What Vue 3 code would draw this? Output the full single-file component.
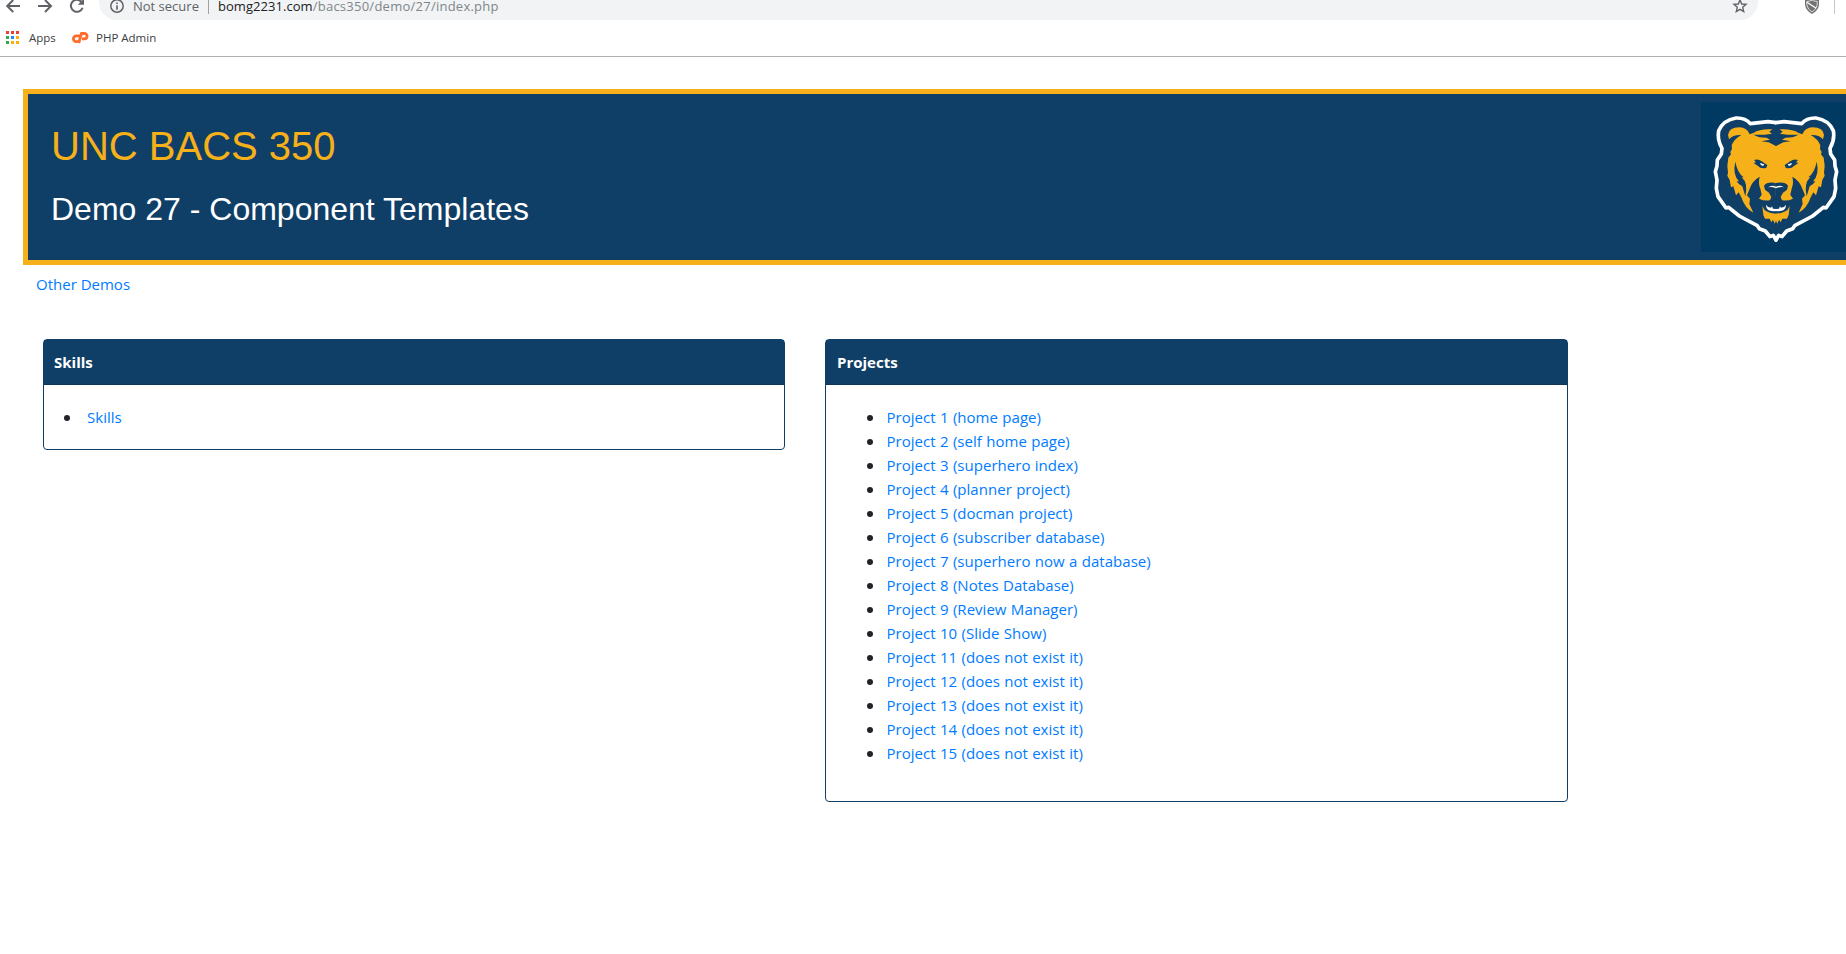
<script setup>
const tiles = [
  ['#ea4335', '#ea4335', '#ea4335'],
  ['#34a853', '#1a8cff', '#fbb205'],
  ['#34a853', '#fbb205', '#fbb205'],
].flat().map((color, i) => ({ color, x: (i % 3) * 5, y: Math.floor(i / 3) * 5 }))

const titles = [
  'home page', 'self home page', 'superhero index', 'planner project', 'docman project',
  'subscriber database', 'superhero now a database', 'Notes Database', 'Review Manager', 'Slide Show',
  'does not exist it', 'does not exist it', 'does not exist it', 'does not exist it', 'does not exist it',
]
const projects = titles.map((t, i) => `Project ${i + 1} (${t})`)

// The bear's head is symmetric: one half is drawn, then mirrored about x = 240.
const halves = ['', 'translate(480 0) scale(-1 1)']
const headPath = 'M240 128L216 125 163 131Q148 113 120 114 82 120 68 152 63 180 78 205L76 222 64 240 63 258 58 275 63 300 61 325 66 350 90 384 98 382 130 408 184 437 190 446 208 453 222 470 232 466 240 480'
</script>

<template>
  <div class="window">
    <header class="chrome">
      <div class="toolbar">
        <svg class="nav" width="90" height="20" viewBox="0 0 90 20">
          <g fill="none" stroke="#5f6368" stroke-width="2">
            <path d="M20 6H8M13.200 0L7.200 6l6 6" />
            <path d="M38 6h12M45 0l6 6-6 6" />
            <path d="M82.600 7.700A6 6 0 1 1 81.300 1.700" />
          </g>
          <path fill="#5f6368" d="M84 -1.500v6.200h-6.200z" />
        </svg>
        <div class="omnibox">
          <svg class="info" width="16" height="16" viewBox="0 0 16 16">
            <circle cx="8" cy="8" r="6.200" fill="none" stroke="#5f6368" stroke-width="1.500" />
            <path fill="#5f6368" d="M7.200 4.500h1.600V6H7.200zM7.200 7.200h1.600v4.500H7.200z" />
          </svg>
          <span class="secure">Not secure</span>
          <span class="bar"></span>
          <span class="url"><b>bomg2231.com</b>/bacs350/demo/27/index.php</span>
          <svg class="star" width="16" height="16" viewBox="0 0 16 16">
            <path d="M8 2l1.700 4 4.300.4-3.300 2.900 1 4.300L8 11.300l-3.700 2.300 1-4.300L2 6.400 6.300 6z" fill="none" stroke="#5f6368" stroke-width="1.400" />
          </svg>
        </div>
        <svg class="shield" width="16" height="18" viewBox="0 0 16 18">
          <path d="M1 3Q5 3 8 1q3 2 7 2v5q-1 6-7 9-6-3-7-9z" fill="#737373" />
          <path d="M2.800 4.500Q6 4.300 8 3q2 1.300 5.200 1.500V8q-.9 4.500-5.200 7-4.300-2.500-5.200-7z" fill="none" stroke="#e8e8e8" stroke-width=".9" />
          <path d="M3 5.200l9.200 6" stroke="#fff" stroke-width="1.300" />
        </svg>
        <span class="edge"></span>
      </div>
      <nav class="bookmarks">
        <svg class="tiles" width="13" height="13" viewBox="0 0 13 13">
          <rect v-for="(t, i) in tiles" :key="i" :x="t.x" :y="t.y" width="3" height="3" :fill="t.color" />
        </svg>
        <span class="apps">Apps</span>
        <svg class="cp" width="17" height="13" viewBox="0 0 17 13">
          <g fill="none" stroke="#ff6c2c" stroke-width="2.800">
            <path d="M8 4.800H4.300a2.900 2.900 0 0 0 0 5.800H6" />
            <path d="M6.700 12L9.500 2.500h2.900a2.500 2.500 0 0 1 0 5.300H10" />
          </g>
        </svg>
        <span class="php">PHP Admin</span>
      </nav>
    </header>

    <main>
      <section class="banner">
        <div>
          <h1>UNC BACS 350</h1>
          <h2>Demo 27 - Component Templates</h2>
        </div>
        <svg class="bear" width="150" height="150" viewBox="15 66 450 450">
          <rect x="15" y="66" width="450" height="450" fill="#003a63" />
          <rect class="navy" x="236" y="130" width="8" height="336" />
          <g v-for="(flip, i) in halves" :key="'head' + i" :transform="flip">
            <path class="navy" :d="headPath" />
            <path class="outline" :d="headPath" />
          </g>
          <g v-for="(flip, i) in halves" :key="'face' + i" :transform="flip">
            <path class="gold" d="M241 199L218 187 196 184 222 179 212 173 190 172 172 164 206 164 228 161 220 155 229 148Q192 146 172 159L161 163Q154 143 130 142 98 143 96 164L99 178Q110 164 136 165 113 178 107 196L108 207 103 216 105 223 97 233 94 257 96 278 94 287 101 300 105 322 112 319 120 346 128 337 136 352Q147 386 172 398L160 372 162 356 153 346 161 326Q169 302 191 290 186 310 193 326L197 344 189 356Q208 365 223 360L229 348 241 348z" />
            <path class="navy" d="M118 245Q124 278 143 292L137 292Q157 309 148 349L139 319Q127 313 122 304L129 304Q109 283 118 245z" />
            <path class="navy" d="M174 240Q187 236 197 244L214 255 211 263Q196 268 185 257L173 249 180 247z" />
            <path class="white" d="M192 249l13 4-4 5q-8-1-9-9z" />
            <path class="navy" d="M240 309Q213 304 204 317L207 329 219 338 226 351 222 362 240 362z" />
            <path class="white" d="M216 322Q227 314 240 320V325Q227 319 216 322z" />
            <path class="gold" d="M199 377L205 389Q216 399 241 401V420L236 431 231 419 226 427 221 416 207 416 202 405z" />
            <path class="white" d="M210 374Q214 382 225 383L228 379 231 386 241 387V393Q210 397 210 374z" />
          </g>
          <rect class="navy" x="238" y="311" width="4" height="7" />
          <rect class="navy" x="238" y="326" width="4" height="38" />
        </svg>
      </section>
      <a class="other">Other Demos</a>

      <div class="cards">
        <section class="card">
          <h3>Skills</h3>
          <ul class="tight"><li><a>Skills</a></li></ul>
        </section>
        <section class="card projects">
          <h3>Projects</h3>
          <ul><li v-for="p in projects" :key="p"><a>{{ p }}</a></li></ul>
        </section>
      </div>
    </main>
  </div>
</template>

<style>
body { margin: 0; overflow: hidden; background: #fff; }
</style>

<style scoped>
* { box-sizing: border-box; }
.window { width: 1846px; height: 954px; overflow: hidden; font-family: "Open Sans", "Noto Sans", sans-serif; }
.chrome { height: 57px; border-bottom: 1px solid #b0b0b0; }
.toolbar { display: flex; height: 20px; align-items: flex-start; }
.nav { flex: none; margin-right: 9px; }
.omnibox { display: flex; width: 1659px; height: 20px; background: #f1f3f4; border-radius: 0 0 18px 18px; padding-left: 10px; color: #5f6368; font-size: 13px; line-height: 13px; white-space: nowrap; }
.info { margin-top: -2px; }
.secure { width: 68px; margin-left: 8px; }
.bar { width: 1px; height: 14px; margin: 0 9px 0 7px; background: #9aa0a6; }
.url { color: #80868b; letter-spacing: .25px; }
.url b { font-weight: 400; color: #202124; letter-spacing: 0.05px; }
.star { margin: -2px 10px 0 auto; }
.shield { margin: -3px 0 0 46px; }
.edge { width: 1px; height: 14px; margin-left: 14px; background: #c8c8c8; }
.bookmarks { display: flex; padding-left: 6px; font-size: 11.5px; line-height: 16px; color: #3c4043; padding-top: 10px; white-space: nowrap; }
.tiles { margin: 1px 10px 0 0; }
.apps { width: 27px; }
.cp { margin: 1px 7px 0 16px; }
.banner { display: flex; justify-content: space-between; width: 1833px; height: 176px; margin: 32px 0 0 23px; padding: 8px 0 0 23px; border: 5px solid #f6b01a; background: #0f3e66; font-family: "Liberation Sans", Arial, sans-serif; }
.navy { fill: #0f3e66; }
.gold { fill: #f6b01a; }
.white { fill: #fff; }
.outline { fill: none; stroke: #fff; stroke-width: 11; stroke-linejoin: round; stroke-linecap: round; }
h1 { margin: 20px 0 0; font-size: 40px; font-weight: 400; line-height: 48px; color: #f6b01a; }
h2 { margin: 20px 0 0; font-size: 32px; font-weight: 400; line-height: 38px; color: #fff; }
a { color: #007bff; }
.other { display: block; margin: 7px 0 0 36px; font-size: 15px; line-height: 24px; }
.cards { display: flex; align-items: flex-start; margin: 43px 0 0 43px; gap: 40px; }
.card { width: 742px; height: 111px; border: 1px solid #0f3e66; border-radius: 4px; }
.projects { width: 743px; height: 463px; }
h3 { height: 45px; margin: 0; padding: 0 10px; font-size: 15px; line-height: 44px; font-weight: 700; color: #fff; background: #0f3e66; border-bottom: 1px solid #0d3558; }
.projects h3 { padding-left: 11px; }
ul { margin: 20px 0 0; padding-left: 60px; font-size: 15px; line-height: 24px; letter-spacing: .03px; word-spacing: .4px; color: #212529; list-style: none; }
li { display: flex; }
li::before { content: ""; width: 6px; height: 6px; margin: 10px 13.5px 0 -19px; border-radius: 50%; background: #212529; }
.tight { padding-left: 43px; }
.tight li::before { margin: 10px 17px 0 -23px; }
</style>
